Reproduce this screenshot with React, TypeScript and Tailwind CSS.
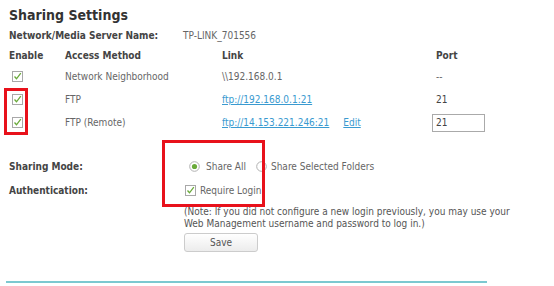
const Check = () => (
  <svg width="11" height="11" viewBox="0 0 11 11" className="shrink-0">
    <rect x="0.5" y="0.5" width="10" height="10" fill="#fff" stroke="#a8a8a8" />
    <path d="M2.5 5.5 L4.5 7.8 L8.8 2.2" fill="none" stroke="#6aaa3a" strokeWidth="1.3" />
  </svg>
);

const Radio = ({ on }: { on?: boolean }) => (
  <svg width="11" height="11" viewBox="0 0 11 11" className="shrink-0">
    <circle cx="5.5" cy="5.5" r="4.8" fill="#fff" stroke="#b0b0b0" />
    {on && <circle cx="5.5" cy="5.5" r="2.6" fill="#6aaa3a" />}
  </svg>
);

const rows = [
  { method: "Network Neighborhood", link: "\\\\192.168.0.1", port: "--", isUrl: false },
  { method: "FTP", link: "ftp://192.168.0.1:21", port: "21", isUrl: true },
  { method: "FTP (Remote)", link: "ftp://14.153.221.246:21", port: "input", isUrl: true, edit: true },
];

export default function App() {
  return (
    <div
      className="relative w-[554px] h-[286px] bg-white text-[10px] text-[#666] overflow-hidden"
      style={{ fontFamily: '"DejaVu Sans Condensed", "DejaVu Sans", sans-serif' }}
    >
      <div className="pl-[9px] pt-[5px]">
        <h2 className="h-[21px] text-[14px] font-bold text-[#333] leading-[21px]">Sharing Settings</h2>
        <div className="flex h-[19px] items-center">
          <span className="w-[174px] font-bold text-[#444]">Network/Media Server Name:</span>
          <span>TP-LINK_701556</span>
        </div>

        <div className="grid grid-cols-[56px_157px_214px_1fr] h-[20px] items-center font-bold text-[#444]">
          <span>Enable</span>
          <span>Access Method</span>
          <span>Link</span>
          <span>Port</span>
        </div>

        {rows.map((r, i) => (
          <div key={i} className="grid grid-cols-[56px_157px_214px_1fr] h-[23px] items-center">
            <span className="pl-[3px]">
              <Check />
            </span>
            <span>{r.method}</span>
            <span className="flex gap-[14px]">
              <span className={r.isUrl ? "text-[#3a9ad0] underline" : ""}>{r.link}</span>
              {r.edit && <span className="text-[#3a9ad0] underline">Edit</span>}
            </span>
            {r.port === "input" ? (
              <span className="-ml-[4px] flex h-[18px] w-[53px] items-center border border-[#aaa] pl-[3px] text-[#444]">
                21
              </span>
            ) : (
              <span className={r.port === "21" ? "text-[#444]" : ""}>{r.port}</span>
            )}
          </div>
        ))}

        <div className="mt-[20px] flex h-[24px] items-center">
          <span className="w-[180px] font-bold text-[#444]">Sharing Mode:</span>
          <span className="flex items-center gap-[6px]">
            <Radio on />
            <span>Share All</span>
          </span>
          <span className="ml-[10px] flex items-center gap-[4px]">
            <Radio />
            <span>Share Selected Folders</span>
          </span>
        </div>
        <div className="flex h-[24px] items-center">
          <span className="w-[176px] font-bold text-[#444]">Authentication:</span>
          <span className="flex items-center gap-[4px]">
            <Check />
            <span>Require Login</span>
          </span>
        </div>
        <p className="ml-[175px] mt-[4px] leading-[12px] text-[#555]">
          (Note: If you did not configure a new login previously, you may use your
          <br />
          Web Management username and password to log in.)
        </p>
        <button className="ml-[175px] mt-[3px] h-[19px] w-[74px] rounded-[3px] border border-[#ccc] bg-gradient-to-b from-white to-[#ececec] text-[#555]">
          Save
        </button>
      </div>
      <div className="ml-[6px] mt-[29px] h-[2px] w-[481px] bg-[#7cc8d0]" />

      {/* red annotation boxes */}
      <div className="absolute left-[4px] top-[88px] h-[47px] w-[24px] border-[3px] border-[#e8111b]" />
      <div className="absolute left-[162px] top-[140px] h-[67px] w-[103px] border-[3px] border-[#e8111b]" />
    </div>
  );
}
